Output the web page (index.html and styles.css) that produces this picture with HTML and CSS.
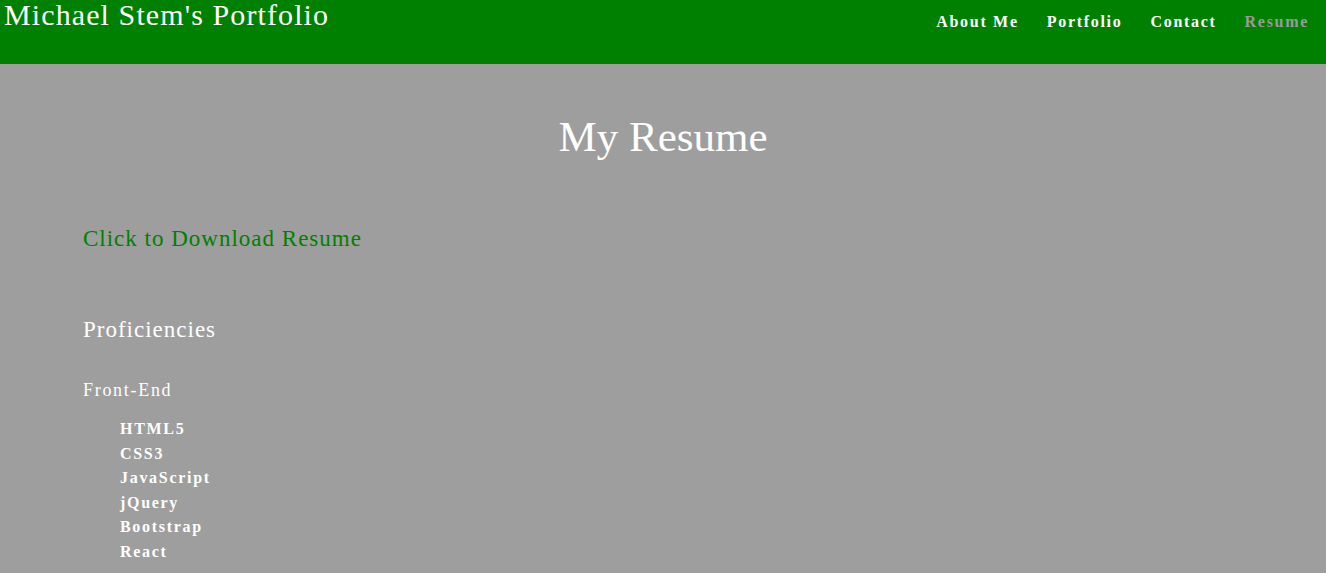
FILE: index.html
```html
<!DOCTYPE html>
<html>
<head>
<meta charset="utf-8">
<link rel="stylesheet" href="styles.css">
</head>
<body>
<header class="topbar">
  <h1 class="brand">Michael Stem's Portfolio</h1>
  <nav class="nav">
    <a class="nav-link" href="#">About Me</a>
    <a class="nav-link" href="#">Portfolio</a>
    <a class="nav-link" href="#">Contact</a>
    <a class="nav-link active" href="#">Resume</a>
  </nav>
</header>
<main class="content">
  <h2 class="page-title">My Resume</h2>
  <a class="download" href="#">Click to Download Resume</a>
  <h3 class="section-title">Proficiencies</h3>
  <h4 class="group-title">Front-End</h4>
  <ul class="skills">
    <li>HTML5</li>
    <li>CSS3</li>
    <li>JavaScript</li>
    <li>jQuery</li>
    <li>Bootstrap</li>
    <li>React</li>
  </ul>
</main>
</body>
</html>
```
FILE: styles.css
```css
html, body {
  margin: 0;
  padding: 0;
}
body {
  background: #9e9e9e;
  font-family: "Liberation Serif", "Times New Roman", serif;
  color: #fff;
}
.topbar {
  background: #008000;
  height: 64px;
  display: flex;
  justify-content: space-between;
  align-items: flex-start;
}
.brand {
  margin: 0;
  padding: 0 0 0 4px;
  font-size: 30px;
  font-weight: normal;
  letter-spacing: 1.1px;
  line-height: 30px;
}
.nav {
  display: flex;
  gap: 28px;
  padding: 12px 17px 0 0;
}
.nav-link {
  color: #fff;
  text-decoration: none;
  font-weight: bold;
  font-size: 16px;
  letter-spacing: 1.7px;
  line-height: 20px;
}
.nav-link.active {
  color: #9a9a9a;
}
.content {
  padding: 0 83px;
  display: flex;
  flex-direction: column;
  align-items: flex-start;
}
.page-title {
  align-self: stretch;
  text-align: center;
  font-size: 43px;
  font-weight: normal;
  margin: 48px 0 0;
  line-height: 50px;
}
.download {
  color: #008000;
  text-decoration: none;
  font-size: 23px;
  letter-spacing: 1px;
  margin-top: 64px;
  line-height: 26px;
}
.section-title {
  font-size: 23px;
  font-weight: normal;
  letter-spacing: 1px;
  margin: 65px 0 0;
  line-height: 26px;
}
.group-title {
  font-size: 18px;
  font-weight: normal;
  letter-spacing: 1.7px;
  margin: 36px 0 0;
  line-height: 22px;
}
.skills {
  list-style: none;
  margin: 16px 0 0;
  padding: 0 0 0 37px;
}
.skills li {
  font-size: 16px;
  font-weight: bold;
  letter-spacing: 1.7px;
  line-height: 24.5px;
}
```
